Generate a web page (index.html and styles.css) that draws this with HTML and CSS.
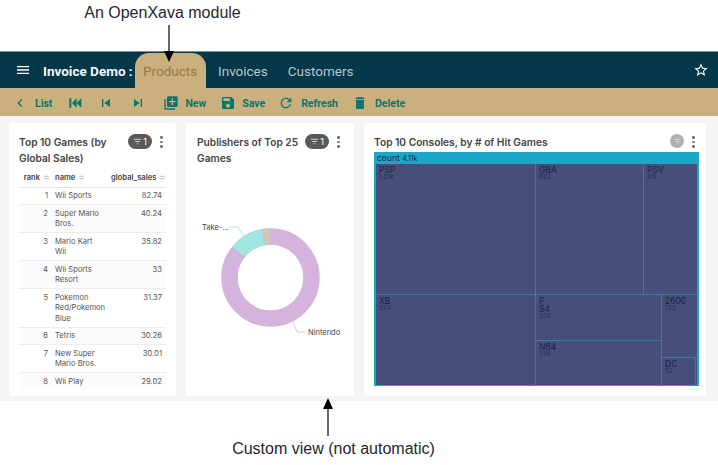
FILE: index.html
```html
<!DOCTYPE html>
<html lang="en">
<head>
    <meta charset="UTF-8">
    <title>Invoice Demo - Products</title>
    <link rel="stylesheet" href="styles.css">
</head>
<body>
    <div class="note note-top">An OpenXava module</div>

    <nav class="navbar">
        <svg class="menu-icon" viewBox="0 0 24 24"><path d="M3,6H21V8H3V6M3,11H21V13H3V11M3,16H21V18H3V16Z"/></svg>
        <span class="app-name">Invoice Demo :</span>
        <span class="tab tab-active">Products</span>
        <span class="tab">Invoices</span>
        <span class="tab">Customers</span>
        <svg class="star-icon" viewBox="0 0 24 24"><path d="M12,15.39L8.24,17.66L9.23,13.38L5.91,10.5L10.29,10.13L12,6.09L13.71,10.13L18.09,10.5L14.77,13.38L15.76,17.66M22,9.24L14.81,8.63L12,2L9.19,8.62L2,9.24L7.45,13.97L5.82,21L12,17.27L18.18,21L16.54,13.97L22,9.24Z"/></svg>
    </nav>

    <div class="toolbar">
        <span class="action action-list"><svg viewBox="0 0 24 24"><path d="M15.41,16.58L10.83,12L15.41,7.41L14,6L8,12L14,18L15.41,16.58Z"/></svg>List</span>
        <span class="action action-first"><svg viewBox="0 0 24 24"><path d="M20,5V19L13,12L20,5M13,5V19L6,12L13,5M2,5H5V19H2V5Z"/></svg></span>
        <span class="action action-prev"><svg viewBox="0 0 24 24"><path d="M6,18V6H8V18H6M9.5,12L18,6V18L9.5,12Z"/></svg></span>
        <span class="action action-next"><svg viewBox="0 0 24 24"><path d="M16,18H18V6H16M6,18L14.5,12L6,6V18Z"/></svg></span>
        <span class="action action-new"><svg viewBox="0 0 24 24"><path d="M19,11H15V15H13V11H9V9H13V5H15V9H19M20,2H8A2,2 0 0,0 6,4V16A2,2 0 0,0 8,18H20A2,2 0 0,0 22,16V4A2,2 0 0,0 20,2M4,6H2V20A2,2 0 0,0 4,22H18V20H4V6Z"/></svg>New</span>
        <span class="action action-save"><svg viewBox="0 0 24 24"><path d="M15,9H5V5H15M12,19A3,3 0 0,1 9,16A3,3 0 0,1 12,13A3,3 0 0,1 15,16A3,3 0 0,1 12,19M17,3H5C3.89,3 3,3.9 3,5V19A2,2 0 0,0 5,21H19A2,2 0 0,0 21,19V7L17,3Z"/></svg>Save</span>
        <span class="action action-refresh"><svg viewBox="0 0 24 24"><path d="M17.65,6.35C16.2,4.9 14.21,4 12,4A8,8 0 0,0 4,12A8,8 0 0,0 12,20C15.73,20 18.84,17.45 19.73,14H17.65C16.83,16.33 14.61,18 12,18A6,6 0 0,1 6,12A6,6 0 0,1 12,6C13.66,6 15.14,6.69 16.22,7.78L13,11H20V4L17.65,6.35Z"/></svg>Refresh</span>
        <span class="action action-delete"><svg viewBox="0 0 24 24"><path d="M19,4H15.5L14.5,3H9.5L8.5,4H5V6H19M6,19A2,2 0 0,0 8,21H16A2,2 0 0,0 18,19V7H6V19Z"/></svg>Delete</span>
    </div>

    <main class="dashboard">
        <section class="card card-table">
            <header class="card-header">
                <h2>Top 10 Games (by Global Sales)</h2>
                <span class="filter-badge"><svg viewBox="0 0 12 12"><path d="M1 3h10M3 6h6M5 9h2"/></svg>1</span>
                <span class="kebab"><i></i><i></i><i></i></span>
            </header>
            <table class="games">
                <thead>
                    <tr><th class="col-rank">rank <b class="sort">≑</b></th><th class="col-name">name <b class="sort">≑</b></th><th class="col-sales">global_sales <b class="sort">≑</b></th></tr>
                </thead>
                <tbody>
                    <tr><td class="col-rank">1</td><td class="col-name">Wii Sports</td><td class="col-sales">82.74</td></tr>
                    <tr><td class="col-rank">2</td><td class="col-name">Super Mario Bros.</td><td class="col-sales">40.24</td></tr>
                    <tr><td class="col-rank">3</td><td class="col-name">Mario Kart<br>Wii</td><td class="col-sales">35.82</td></tr>
                    <tr><td class="col-rank">4</td><td class="col-name">Wii Sports Resort</td><td class="col-sales">33</td></tr>
                    <tr><td class="col-rank">5</td><td class="col-name">Pokemon Red/Pokemon Blue</td><td class="col-sales">31.37</td></tr>
                    <tr><td class="col-rank">6</td><td class="col-name">Tetris</td><td class="col-sales">30.26</td></tr>
                    <tr><td class="col-rank">7</td><td class="col-name">New Super Mario Bros.</td><td class="col-sales">30.01</td></tr>
                    <tr><td class="col-rank">8</td><td class="col-name">Wii Play</td><td class="col-sales">29.02</td></tr>
                </tbody>
            </table>
        </section>

        <section class="card card-donut">
            <header class="card-header">
                <h2>Publishers of Top 25 Games</h2>
                <span class="filter-badge"><svg viewBox="0 0 12 12"><path d="M1 3h10M3 6h6M5 9h2"/></svg>1</span>
                <span class="kebab"><i></i><i></i><i></i></span>
            </header>
            <svg class="donut" viewBox="0 0 168 230" width="168" height="230">
                <g transform="rotate(-90 84.5 114.5)" fill="none" stroke-width="16.5">
                    <circle cx="84.5" cy="114.5" r="41" stroke="#d4b4dc"/>
                    <circle cx="84.5" cy="114.5" r="41" stroke="#a0e6e2" stroke-dasharray="29.3 228.3" stroke-dashoffset="-220.4"/>
                    <circle cx="84.5" cy="114.5" r="41" stroke="#d2c6b8" stroke-dasharray="7.9 249.7" stroke-dashoffset="-249.7"/>
                </g>
                <path class="leader leader-take" d="M43 64h9l6 10"/>
                <path class="leader leader-nintendo" d="M107 159l4 10h8"/>
                <text x="16" y="67">Take-...</text>
                <text x="122" y="172">Nintendo</text>
            </svg>
        </section>

        <section class="card card-tree">
            <header class="card-header">
                <h2>Top 10 Consoles, by # of Hit Games</h2>
                <span class="filter-dot"><svg viewBox="0 0 12 12"><path d="M2 3h8M3.5 6h5M5 9h2"/></svg></span>
                <span class="kebab"><i></i><i></i><i></i></span>
            </header>
            <div class="treemap">
                <div class="tree-title">count <small>4.11k</small></div>
                <div class="tree-body">
                    <div class="tree-row tree-row-top">
                        <div class="cell cell-psp">PSP<small>1.21k</small></div>
                        <div class="cell cell-gba">GBA<small>822</small></div>
                        <div class="cell cell-psv">PSV<small>411</small></div>
                    </div>
                    <div class="tree-row tree-row-bottom">
                        <div class="cell cell-xb">XB<small>824</small></div>
                        <div class="tree-col tree-col-mid">
                            <div class="cell cell-ps4">P<br>S4<small>338</small></div>
                            <div class="cell cell-n64">N64<small>319</small></div>
                        </div>
                        <div class="tree-col tree-col-right">
                            <div class="cell cell-2600">2600<small>133</small></div>
                            <div class="tree-row tree-row-dc">
                                <div class="cell cell-dc">DC<small>52</small></div>
                                <div class="cell cell-tiny"></div>
                            </div>
                        </div>
                    </div>
                </div>
            </div>
        </section>
    </main>

    <div class="note note-bottom">Custom view (not automatic)</div>

    <svg class="arrow arrow-top" viewBox="0 0 12 38" width="12" height="38"><path d="M6 0V30" stroke="#000" stroke-width="1.2"/><path d="M1 26H11L6 37Z" fill="#000"/></svg>
    <svg class="arrow arrow-bottom" viewBox="0 0 12 38" width="12" height="38"><path d="M6 38V8" stroke="#000" stroke-width="1.2"/><path d="M1 11H11L6 0Z" fill="#000"/></svg>
</body>
</html>
```

FILE: styles.css
```css
* {
    box-sizing: border-box;
    margin: 0;
    padding: 0;
}

body {
    position: relative;
    width: 718px;
    height: 465px;
    overflow: hidden;
    background: #fff;
    font-family: "Inter", sans-serif;
}

/* Captions around the screenshot */
.note {
    font-family: "Liberation Sans", sans-serif;
    font-size: 16px;
    color: #26262e;
    text-align: center;
}

.note-top {
    height: 51px;
    width: 325px;
    padding-top: 4px;
    line-height: 18px;
}

.note-bottom {
    width: 667px;
    padding-top: 39px;
    line-height: 18px;
}

.arrow {
    position: absolute;
}

.arrow-top {
    left: 163px;
    top: 25px;
}

.arrow-bottom {
    left: 322px;
    top: 398px;
}

/* Top navigation */
.navbar {
    display: flex;
    align-items: flex-end;
    height: 37px;
    background: #03374a;
    border-top: 1px solid #7d8d93;
    font-family: "Roboto", sans-serif;
    font-size: 13.5px;
}

.menu-icon {
    width: 16px;
    height: 16px;
    margin: 0 0 10px 15px;
    fill: #fff;
}

.app-name {
    margin-left: 12px;
    width: 92px;
    line-height: 34px;
    font-weight: 700;
    font-size: 13.5px;
    color: #f4f6f7;
    white-space: nowrap;
}

.tab {
    padding: 2px 10px 0;
    line-height: 33px;
    color: #b9c6cb;
}

.tab-active {
    width: 71px;
    padding: 2px 8px 0;
    margin-right: 2px;
    border-radius: 14px 14px 0 0;
    background: #c9b07c;
    color: #987a47;
}

.star-icon {
    width: 16px;
    height: 16px;
    margin: 0 9px 10px auto;
    fill: #fff;
}

/* Action bar */
.toolbar {
    display: flex;
    align-items: center;
    height: 28px;
    padding-top: 2px;
    background: #c9b07c;
    font-family: "Roboto", sans-serif;
    font-size: 10.5px;
    font-weight: 700;
    color: #0a7670;
}

.action {
    display: flex;
    align-items: center;
    white-space: nowrap;
}

.action svg {
    width: 16px;
    height: 16px;
    fill: #0a7670;
}

.action-list { margin-left: 12px; }
.action-list svg { margin-right: 7px; }
.action-first { margin-left: 16px; }
.action-prev { margin-left: 14px; }
.action-next { margin-left: 16px; }
.action-new { margin-left: 17px; }
.action-new svg { margin-right: 6px; }
.action-save { margin-left: 14px; }
.action-save svg { margin-right: 6px; }
.action-refresh { margin-left: 13px; }
.action-refresh svg { margin-right: 7px; }
.action-delete { margin-left: 14px; }
.action-delete svg { margin-right: 7px; }

/* Dashboard cards */
.dashboard {
    display: flex;
    gap: 10px;
    height: 285px;
    padding: 7px 12px 5px 9px;
    background: #f5f5f5;
}

.card {
    overflow: hidden;
    background: #fff;
    border-radius: 2px;
}

.card-table { width: 167px; padding: 10px 10px 0; }
.card-donut { width: 168px; padding: 10px 11px 0; }
.card-tree { width: 342px; padding: 10px 10px 0; }

.card-header {
    display: flex;
    align-items: flex-start;
}

.card-header h2 {
    flex: 1;
    padding-top: 1px;
    font-size: 10.2px;
    font-weight: 600;
    line-height: 16px;
    color: #444;
}

.filter-badge {
    display: flex;
    flex-shrink: 0;
    align-items: center;
    justify-content: center;
    gap: 1px;
    width: 24px;
    height: 15px;
    margin: 1px 8px 0 4px;
    border-radius: 8px;
    background: #5a5a5a;
    font-size: 9px;
    color: #fff;
}

.filter-badge svg,
.filter-dot svg {
    width: 9px;
    height: 9px;
    fill: none;
    stroke: #ddd;
    stroke-width: 1.2;
}

.filter-dot {
    display: flex;
    align-items: center;
    justify-content: center;
    width: 14px;
    height: 14px;
    margin: 1px 8px 0 0;
    border-radius: 50%;
    background: #b0b0b0;
}

.kebab {
    display: flex;
    flex-shrink: 0;
    flex-direction: column;
    gap: 2px;
    width: 3px;
    margin: 3px 3px 0 0;
}

.kebab i {
    width: 2.5px;
    height: 2.5px;
    border-radius: 50%;
    background: #777;
}

.card-tree .kebab {
    margin-right: 1px;
}

/* Games table */
.games {
    width: 147px;
    margin-top: 4px;
    border-collapse: collapse;
    table-layout: fixed;
    font-size: 7.6px;
    line-height: 10.5px;
    color: #555;
}

.games th {
    padding: 3px 2px 3px;
    font-weight: 600;
    color: #444;
    border-bottom: 1px solid #e4e4e4;
    white-space: nowrap;
}

.games td {
    padding: 3.5px 4px 2.5px;
    border-bottom: 1px solid #ededed;
    vertical-align: top;
}

.games tbody tr:nth-child(even) td {
    background: #fcfcfc;
}

.games tbody tr:last-child td {
    border-bottom: 0;
}

.games .col-rank { width: 33px; text-align: right; }
.games .col-name { width: 58px; text-align: left; }
.games .col-sales { text-align: right; }
.games th.col-sales { padding-left: 1px; }
.games th.col-name { padding-left: 3px; }
.games td.col-name { padding-left: 3px; }

.sort {
    margin-left: 1px;
    font-weight: 400;
    color: #ccc;
}

/* Donut chart */
.donut {
    display: block;
    margin: -3px 0 0 -11px;
}

.donut text {
    font-size: 7.5px;
    fill: #444;
}

.leader {
    fill: none;
    stroke-width: 0.8;
}

.leader-take { stroke: #a0e6e2; }
.leader-nintendo { stroke: #d4b4dc; }

/* Treemap */
.treemap {
    width: 325px;
    height: 234px;
    margin-top: 2px;
    background: #1ca7c9;
    font-size: 8.5px;
    color: #1c2140;
}

.tree-title {
    height: 12px;
    padding-left: 3px;
    line-height: 12px;
}

.tree-title small {
    font-size: 7px;
}

.tree-body {
    display: flex;
    flex-direction: column;
    height: 221px;
    margin: 0 2px;
}

.tree-row {
    display: flex;
}

.tree-row-top { height: 131px; }
.tree-row-bottom { height: 90px; }
.tree-row-dc { height: 27px; }

.tree-col {
    display: flex;
    flex-direction: column;
}

.tree-col-mid { width: 126px; }
.tree-col-right { width: 35px; }

.cell {
    padding: 2px 3px 0;
    background: #474e79;
    border-right: 1px solid #2f80a3;
    border-bottom: 1px solid #2f80a3;
    line-height: 8px;
}

.cell small {
    display: block;
    font-size: 6.5px;
    line-height: 6px;
    color: #282d52;
}

.cell-psp,
.cell-xb { width: 160px; }
.cell-gba { width: 108px; }
.cell-psv { width: 53px; border-right: 0; }
.cell-ps4 { height: 46px; }
.cell-n64 { height: 44px; border-bottom: 0; }
.cell-xb { border-bottom: 0; }
.cell-2600 { height: 63px; border-right: 0; }
.cell-dc { width: 34px; border-bottom: 0; }
.cell-tiny { width: 1px; padding: 0; border: 0; }
```
